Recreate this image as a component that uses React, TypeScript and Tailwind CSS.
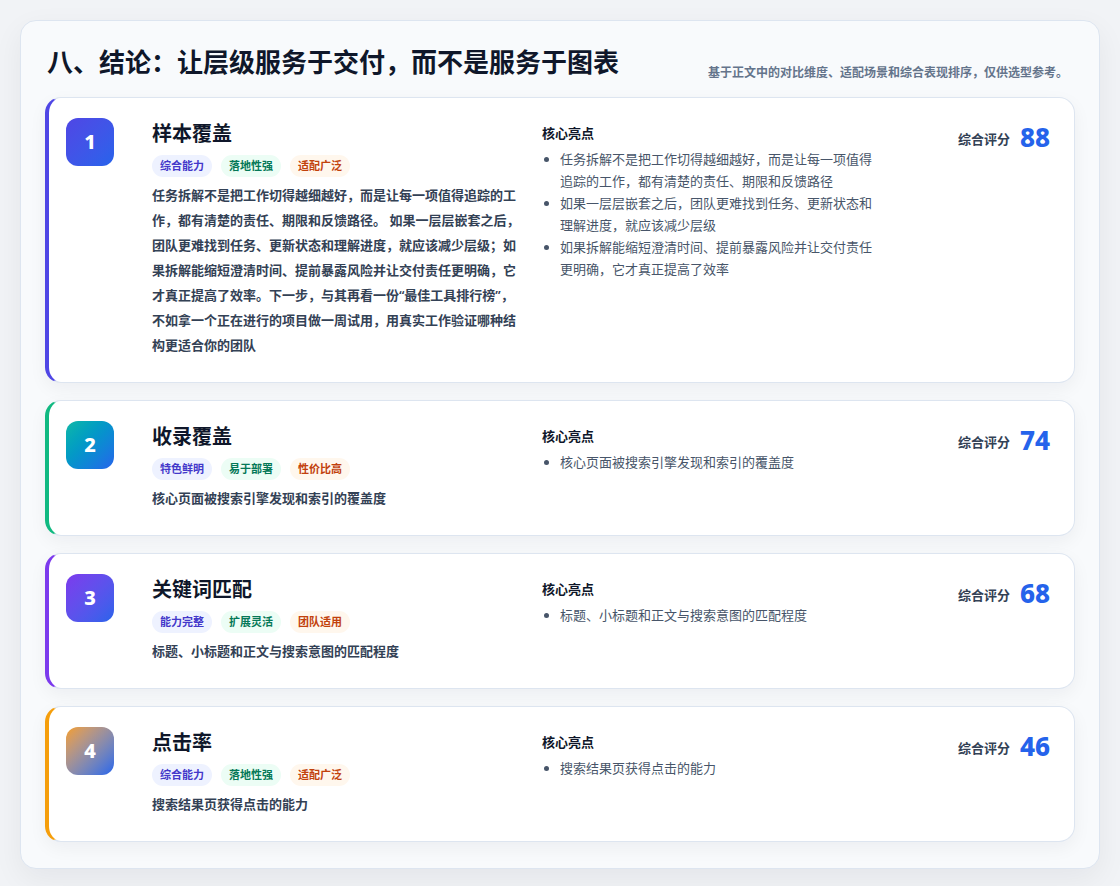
const tagsA = [
  { t: "综合能力", c: "bg-[#eef2ff] text-[#4338ca]" },
  { t: "落地性强", c: "bg-[#ecfdf5] text-[#047857]" },
  { t: "适配广泛", c: "bg-[#fff7ed] text-[#c2410c]" },
];

const items = [
  {
    n: 1,
    title: "样本覆盖",
    border: "border-l-[#4f46e5]",
    grad: "bg-gradient-to-br from-[#4f46e5] to-[#2563eb]",
    tags: tagsA,
    desc: "任务拆解不是把工作切得越细越好，而是让每一项值得追踪的工作，都有清楚的责任、期限和反馈路径。 如果一层层嵌套之后，团队更难找到任务、更新状态和理解进度，就应该减少层级；如果拆解能缩短澄清时间、提前暴露风险并让交付责任更明确，它才真正提高了效率。下一步，与其再看一份“最佳工具排行榜”，不如拿一个正在进行的项目做一周试用，用真实工作验证哪种结构更适合你的团队",
    points: [
      "任务拆解不是把工作切得越细越好，而是让每一项值得追踪的工作，都有清楚的责任、期限和反馈路径",
      "如果一层层嵌套之后，团队更难找到任务、更新状态和理解进度，就应该减少层级",
      "如果拆解能缩短澄清时间、提前暴露风险并让交付责任更明确，它才真正提高了效率",
    ],
    score: 88,
  },
  {
    n: 2,
    title: "收录覆盖",
    border: "border-l-[#10b981]",
    grad: "bg-gradient-to-br from-[#14b8a6] to-[#2563eb]",
    tags: [
      { t: "特色鲜明", c: "bg-[#eef2ff] text-[#4338ca]" },
      { t: "易于部署", c: "bg-[#ecfdf5] text-[#047857]" },
      { t: "性价比高", c: "bg-[#fff7ed] text-[#c2410c]" },
    ],
    desc: "核心页面被搜索引擎发现和索引的覆盖度",
    points: ["核心页面被搜索引擎发现和索引的覆盖度"],
    score: 74,
  },
  {
    n: 3,
    title: "关键词匹配",
    border: "border-l-[#7c3aed]",
    grad: "bg-gradient-to-br from-[#7c3aed] to-[#2563eb]",
    tags: [
      { t: "能力完整", c: "bg-[#eef2ff] text-[#4338ca]" },
      { t: "扩展灵活", c: "bg-[#ecfdf5] text-[#047857]" },
      { t: "团队适用", c: "bg-[#fff7ed] text-[#c2410c]" },
    ],
    desc: "标题、小标题和正文与搜索意图的匹配程度",
    points: ["标题、小标题和正文与搜索意图的匹配程度"],
    score: 68,
  },
  {
    n: 4,
    title: "点击率",
    border: "border-l-[#f59e0b]",
    grad: "bg-gradient-to-br from-[#f59e0b] to-[#2563eb]",
    tags: tagsA,
    desc: "搜索结果页获得点击的能力",
    points: ["搜索结果页获得点击的能力"],
    score: 46,
  },
];

export default function App() {
  return (
    <div
      className="min-h-[886px] bg-[#f1f3f6] p-5"
      style={{ fontFamily: '"Noto Sans", "Noto Sans CJK SC", sans-serif' }}
    >
      <div className="rounded-2xl border border-[#dde5f0] bg-[#f8fafc] px-6 pb-[26px] pt-[20px] shadow-[0_10px_30px_rgba(15,23,42,0.06)]">
        <div className="mb-[14px] flex items-end justify-between pl-[2px] pr-[7px]">
          <h2 className="text-[26px] font-bold leading-[42px] text-[#0f172a]">八、结论：让层级服务于交付，而不是服务于图表</h2>
          <p className="pb-[1px] text-[12px] font-semibold text-[#64748b]">基于正文中的对比维度、适配场景和综合表现排序，仅供选型参考。</p>
        </div>
        <div className="flex flex-col gap-[17px]">
          {items.map((it) => (
            <div
              key={it.n}
              className={`grid grid-cols-[48px_384px_340px_1fr] gap-x-[22px] rounded-2xl border border-[#dde5f0] border-l-4 ${it.border} bg-white pb-[24px] pl-[17px] pr-6 pt-[20px] shadow-[0_6px_18px_rgba(15,23,42,0.05)]`}
            >
              <div className={`flex h-12 w-12 items-center justify-center rounded-xl ${it.grad} text-[20px] font-extrabold text-white`}>
                {it.n}
              </div>
              <div className="pl-[16px]">
                <h3 className="text-[20px] font-bold leading-[32px] text-[#0f172a]">{it.title}</h3>
                <div className="mt-[5px] flex gap-[9px]">
                  {it.tags.map((t) => (
                    <span key={t.t} className={`rounded-full px-2 py-[2px] text-[11px] font-semibold leading-[18px] ${t.c}`}>
                      {t.t}
                    </span>
                  ))}
                </div>
                <p className="mt-[6px] text-[13px] font-semibold leading-[25px] text-[#334155]">{it.desc}</p>
              </div>
              <div className="pt-[4px]">
                <div className="text-[13px] font-bold leading-[22px] text-[#0f172a]">核心亮点</div>
                <ul className="mt-[4px] list-disc pl-[18px] text-[13px] leading-[22px] text-[#475569]">
                  {it.points.map((p) => (
                    <li key={p}>{p}</li>
                  ))}
                </ul>
              </div>
              <div className="flex items-start justify-end gap-[10px]">
                <span className="mt-[12px] text-[13px] font-bold text-[#334155]">综合评分</span>
                <span className="text-[26px] font-extrabold leading-[38px] text-[#2563eb]">{it.score}</span>
              </div>
            </div>
          ))}
        </div>
      </div>
    </div>
  );
}
